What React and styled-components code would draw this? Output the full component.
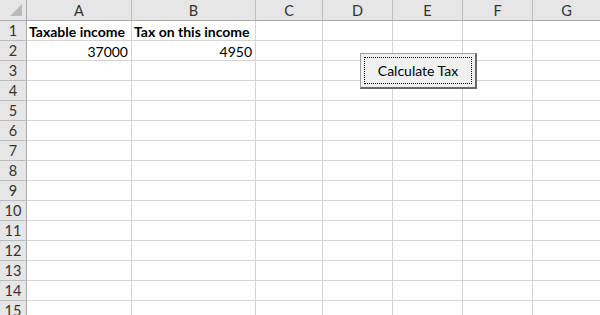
import React from "react";
import styled, { createGlobalStyle } from "styled-components";

const Global = createGlobalStyle`
  html, body { margin: 0; padding: 0; background: #fff; }
  body { font-family: "Lato", "Open Sans", sans-serif; overflow: hidden; }
`;

const Sheet = styled.div`
  position: relative;
  width: 600px;
  height: 315px;
  overflow: hidden;
  background: #fff;
`;

const Grid = styled.div`
  display: grid;
  grid-template-columns: 27px 105px 124px 67px 70px 70px 70px 68px;
  grid-auto-rows: 20px;
  grid-template-rows: 21px;
`;

const Corner = styled.div`
  position: relative;
  background: #e6e6e6;
  border-right: 1px solid #ababab;
  border-bottom: 1px solid #ababab;
  box-sizing: border-box;
  &::after {
    content: "";
    position: absolute;
    right: 4px;
    bottom: 4px;
    width: 0;
    height: 0;
    border-style: solid;
    border-width: 0 0 12px 12px;
    border-color: transparent transparent #b9b9b9 transparent;
  }
`;

const ColHead = styled.div`
  background: #e6e6e6;
  border-right: 1px solid ${(p) => (p.$last ? "transparent" : "#bcbcbc")};
  border-bottom: 1px solid #ababab;
  box-sizing: border-box;
  display: flex;
  align-items: center;
  justify-content: center;
  font-size: 14.5px;
  color: #333;
  padding-top: 1px;
`;

const RowHead = styled.div`
  background: #e6e6e6;
  border-right: 1px solid #ababab;
  border-bottom: 1px solid #bcbcbc;
  box-sizing: border-box;
  display: flex;
  align-items: center;
  justify-content: center;
  font-size: 14.5px;
  color: #333;
`;

const Cell = styled.div`
  border-right: 1px solid #d4d4d4;
  border-bottom: 1px solid #d4d4d4;
  box-sizing: border-box;
  display: flex;
  align-items: center;
  justify-content: ${(p) => (p.$num ? "flex-end" : "flex-start")};
  padding: 1px 3px 0 2px;
  font-size: 14px;
  font-weight: ${(p) => (p.$bold ? 700 : 400)};
  color: #000;
  white-space: nowrap;
  overflow: visible;
`;

const Button = styled.button`
  position: absolute;
  left: 360px;
  top: 53px;
  width: 117px;
  height: 36px;
  box-sizing: border-box;
  background: #f0f0f0;
  border: 1px solid #a0a0a0;
  border-right: 2px solid #696969;
  border-bottom: 2px solid #696969;
  padding: 0;
  font-family: "Lato", "Open Sans", sans-serif;
  font-size: 14px;
  color: #000;
  display: flex;
  align-items: center;
  justify-content: center;
  &::after {
    content: "";
    position: absolute;
    inset: 3px;
    border: 1px dotted #000;
  }
`;

const cols = ["A", "B", "C", "D", "E", "F", "G"];
const data = {
  1: [{ t: "Taxable income", bold: true }, { t: "Tax on this income", bold: true }],
  2: [{ t: "37000", num: true }, { t: "4950", num: true }],
};

export default function App() {
  const rows = Array.from({ length: 15 }, (_, i) => i + 1);
  return (
    <>
      <Global />
      <Sheet>
        <Grid>
          <Corner />
          {cols.map((c, i) => (
            <ColHead key={c} $last={i === cols.length - 1}>
              {c}
            </ColHead>
          ))}
          {rows.map((r) => (
            <React.Fragment key={r}>
              <RowHead>{r}</RowHead>
              {cols.map((c, i) => {
                const d = data[r] && data[r][i];
                return (
                  <Cell key={c} $bold={d && d.bold} $num={d && d.num}>
                    {d ? d.t : ""}
                  </Cell>
                );
              })}
            </React.Fragment>
          ))}
        </Grid>
        <Button>Calculate Tax</Button>
      </Sheet>
    </>
  );
}
